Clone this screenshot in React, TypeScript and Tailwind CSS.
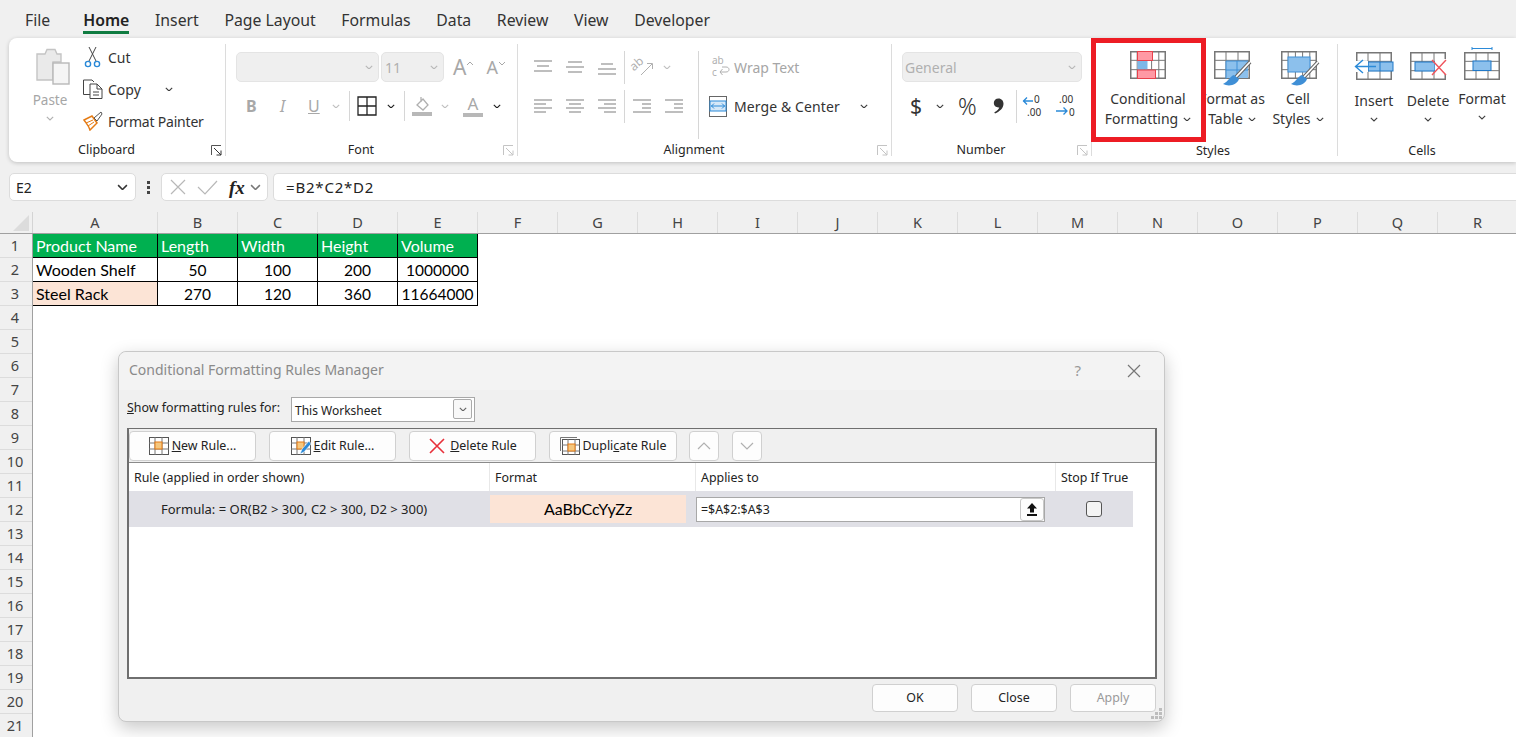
import React from "react";

const Chev = ({ c = "#404040", w = 8, cls = "" }: { c?: string; w?: number; cls?: string }) => (
  <svg width={w} height={w * 0.6} viewBox="0 0 10 6" className={"shrink-0 " + cls}>
    <path d="M1 1 L5 5 L9 1" fill="none" stroke={c} strokeWidth="1.4" />
  </svg>
);

const Launcher = ({ dark = false }: { dark?: boolean }) => (
  <svg width="11" height="11" viewBox="0 0 11 11" className="justify-self-end mt-[1px]">
    <path d="M0.5 10 V0.5 H10" fill="none" stroke={dark ? "#555" : "#c4c4c4"} />
    <path d="M3 3 L10 10 M10 5.5 V10 H5.5" fill="none" stroke={dark ? "#333" : "#c4c4c4"} />
  </svg>
);

const Grid = ({ x = 0, y = 0, w = 36, h = 28, cols = 3, rows = 3, c = "#777" }: any) => {
  const v = [];
  for (let i = 1; i < cols; i++) v.push(x + (w * i) / cols);
  const hz = [];
  for (let i = 1; i < rows; i++) hz.push(y + (h * i) / rows);
  return (
    <g stroke={c} fill="none" strokeWidth="1">
      <rect x={x + 0.75} y={y + 0.75} width={w - 1.5} height={h - 1.5} strokeWidth="1.5" />
      {v.map((p) => (
        <line key={p} x1={p} x2={p} y1={y} y2={y + h} />
      ))}
      {hz.map((p) => (
        <line key={p} y1={p} y2={p} x1={x} x2={x + w} />
      ))}
    </g>
  );
};

const Brush = ({ dx = 0 }: { dx?: number }) => (
  <g transform={`translate(${dx} 0)`}>
    <path d="M38 11 L24 26" stroke="#666" strokeWidth="3.8" />
    <path d="M38 11 L24 26" stroke="#fff" strokeWidth="1.8" />
    <path d="M22 24 C18 25 17 30 11 33 C17 36 25 34 27 28 Z" fill="#3f8fd6" />
  </g>
);

const CondIcon = () => (
  <svg width="37" height="29" viewBox="0 0 37 29">
    <Grid cols={5} rows={3} />
    <rect x="7.5" y="0.5" width="15" height="9" fill="#ff99a4" stroke="#e8424c" />
    <rect x="7.5" y="10" width="10" height="8.5" fill="#7eb7e8" />
    <rect x="7.5" y="19" width="18" height="8.5" fill="#ff99a4" stroke="#e8424c" />
  </svg>
);

const TableIcon = () => (
  <svg width="40" height="36" viewBox="0 0 40 36" className="overflow-visible">
    <Grid x={2} cols={3} rows={3} />
    <rect x="14" y="10" width="22" height="17" fill="#8cc0ec" />
    <path d="M14 10 V28 M25 10 V28 M14 19 H36 M14 10 H36" stroke="#3f8fd6" fill="none" />
    <Brush />
  </svg>
);

const StyleIcon = () => (
  <svg width="40" height="36" viewBox="0 0 40 36" className="overflow-visible">
    <Grid x={3} cols={5} rows={3} />
    <rect x="10" y="6" width="22" height="15" fill="#8cc0ec" stroke="#3f8fd6" />
    <Brush dx={2} />
  </svg>
);

const InsertIcon = () => (
  <svg width="40" height="29" viewBox="0 0 40 29">
    <Grid x={2} cols={3} rows={3} />
    <rect x="14" y="10" width="25" height="9" fill="#8cc0ec" stroke="#1f78c8" />
    <path d="M14 10 V19 M26 10 V19" stroke="#1f78c8" />
    <rect x="0" y="9" width="14" height="11" fill="#fff" />
    <path d="M22 14.5 H2 M9 8 L1.5 14.5 L9 21" stroke="#2b8ad8" strokeWidth="1.4" fill="none" />
  </svg>
);

const DeleteIcon = () => (
  <svg width="40" height="29" viewBox="0 0 40 29">
    <Grid x={2} cols={3} rows={3} />
    <rect x="7" y="10" width="20" height="9" fill="#8cc0ec" stroke="#1f78c8" />
    <rect x="27" y="7" width="13" height="15" fill="#fff" />
    <path d="M24 8 L38 23 M38 8 L24 23" stroke="#f0555d" strokeWidth="1.4" />
  </svg>
);

const FormatIcon = () => (
  <svg width="37" height="35" viewBox="0 0 37 35">
    <path d="M8 1.5 H28 M8 0 V3 M28 0 V3" stroke="#2b8ad8" fill="none" />
    <Grid y={5} cols={3} rows={3} />
    <rect x="9" y="14" width="18" height="9.5" fill="#8cc0ec" stroke="#1f78c8" />
  </svg>
);

const Lines = ({ rows, c = "#a8a8a8" }: { rows: [number, number, number][]; c?: string }) => (
  <svg width="18" height="16" viewBox="0 0 18 16">
    {rows.map(([y, a, b], i) => (
      <line key={i} x1={a} x2={b} y1={y} y2={y} stroke={c} strokeWidth="1.4" />
    ))}
  </svg>
);

const Sep = ({ h = 30 }: { h?: number }) => <div className="w-px bg-[#d6d6d6] shrink-0" style={{ height: h }} />;

const GroupFoot = ({ label, launcher, dark }: { label: string; launcher?: boolean; dark?: boolean }) => (
  <div className="h-[15px] shrink-0 grid grid-cols-[1fr_auto_1fr] items-center pr-[3px] text-[12.5px] leading-[15px] text-[#262626]">
    <span />
    <span className={launcher ? "mr-[18px]" : "mt-[1px]"}>{label}</span>
    {launcher ? <Launcher dark={dark} /> : <span />}
  </div>
);

const BigBtn = ({ icon, l1, l2, w, cls = "" }: { icon: React.ReactNode; l1: string; l2: string; w: number; cls?: string }) => (
  <div className={"flex flex-col items-center shrink-0 " + cls} style={{ width: w }}>
    <div className="h-[45px] pt-[7px] flex justify-center">{icon}</div>
    <div className="text-[14px] leading-[20px] text-[#333] whitespace-nowrap">{l1}</div>
    <div className="text-[14px] leading-[20px] text-[#333] whitespace-nowrap flex items-center gap-[5px]">
      {l2}
      <Chev w={8} />
    </div>
  </div>
);

const CellBtn = ({ icon, label, w, format = false }: { icon: React.ReactNode; label: string; w: number; format?: boolean }) => (
  <div className="flex flex-col items-center shrink-0" style={{ width: w }}>
    <div className={format ? "h-[45px] pt-[3px]" : "h-[47px] pt-[8px]"}>{icon}</div>
    <div className="text-[14px] leading-[20px] text-[#333]">{label}</div>
    <Chev w={8} cls="mt-[6px]" />
  </div>
);

const Clipboard = () => (
  <div className="w-[217px] h-full shrink-0 border-r border-[#dcdcdc] flex flex-col">
    <div className="h-[98px] shrink-0 flex">
      <div className="ml-[12px] w-[62px] pr-[4px] flex flex-col items-center pt-[4px]">
        <svg width="36" height="38" viewBox="0 0 36 38" className="ml-[6px]">
          <path d="M2 6 H10 L12 1.5 H20 L22 6 H26 V14 H18 V32 H2 Z" fill="#eaeaea" stroke="#c4c4c4" strokeWidth="1.4" />
          <rect x="18" y="15" width="16" height="21" fill="#f5f5f5" stroke="#b8b8b8" strokeWidth="1.4" />
        </svg>
        <div className="text-[13.5px] leading-[18px] text-[#a6a6a6] mt-[5px]">Paste</div>
        <Chev c="#b0b0b0" cls="mt-[7px]" />
      </div>
      <div className="-mt-[3px] text-[14px] text-[#333]">
        <div className="h-[32px] flex items-center gap-[5px]">
          <svg width="20" height="22" viewBox="0 0 20 22">
            <path d="M6 1 L13 15 M13 1 L6 15" stroke="#444" fill="none" />
            <circle cx="5" cy="18" r="2.6" fill="none" stroke="#2b8ad8" strokeWidth="1.4" />
            <circle cx="14" cy="18" r="2.6" fill="none" stroke="#2b8ad8" strokeWidth="1.4" />
          </svg>
          Cut
        </div>
        <div className="h-[32px] flex items-center gap-[5px]">
          <svg width="20" height="20" viewBox="0 0 20 20">
            <path d="M8 15.5 H0.5 V1 H9 L11 3" fill="#fff" stroke="#444" />
            <path d="M7 5 H14 L19 10 V19.5 H7 Z M14 5 V10 H19" fill="#fff" stroke="#444" />
            <path d="M10 13 H16 M10 16 H16" stroke="#444" />
          </svg>
          Copy
          <Chev cls="ml-[19px]" />
        </div>
        <div className="h-[32px] flex items-center gap-[5px] tracking-[-0.2px]">
          <svg width="20" height="20" viewBox="0 0 20 20">
            <path d="M1 9 L9 5 L14 12 L7 19 C6 15 3 12 1 9 Z" fill="#fff" stroke="#e57b14" strokeWidth="1.5" />
            <path d="M3 12 L10 9 M5 15 L11 11" stroke="#e57b14" />
            <path d="M11 7 L18 1 L19 3 L14 10 Z" fill="#fff" stroke="#555" />
          </svg>
          Format Painter
        </div>
      </div>
    </div>
    <GroupFoot label="Clipboard" launcher dark />
  </div>
);

const FontGroup = () => (
  <div className="w-[292px] h-full shrink-0 border-r border-[#dcdcdc] flex flex-col">
    <div className="h-[98px] shrink-0 pl-[10px] pt-[8px]">
      <div className="flex items-center h-[30px]">
        <div className="w-[143px] h-[30px] bg-[#efefef] border border-[#e4e4e4] rounded-[5px] flex items-center justify-end pr-[5px]">
          <Chev c="#b8b8b8" />
        </div>
        <div className="ml-[2px] w-[63px] h-[30px] bg-[#efefef] border border-[#e4e4e4] rounded-[5px] flex items-center justify-between px-[3px] pr-[5px] text-[14px] text-[#b0b0b0]">
          11
          <Chev c="#b8b8b8" />
        </div>
        <span className="ml-[9px] text-[21px] text-[#a8a8a8] leading-none">A</span>
        <svg width="8" height="5" viewBox="0 0 8 5" className="mb-[8px]"><path d="M1 4 L4 1 L7 4" fill="none" stroke="#a8a8a8" /></svg>
        <span className="ml-[12px] text-[18px] text-[#a8a8a8] leading-none">A</span>
        <svg width="8" height="5" viewBox="0 0 8 5" className="mb-[8px]"><path d="M1 1 L4 4 L7 1" fill="none" stroke="#a8a8a8" /></svg>
      </div>
      <div className="flex items-center h-[30px] mt-[9px]">
        <span className="ml-[10px] w-[15px] text-[16px] font-bold text-[#a8a8a8]">B</span>
        <span className="ml-[19px] w-[10px] text-[16px] italic text-[#a8a8a8]">I</span>
        <span className="ml-[18px] w-[14px] text-[16px] underline text-[#a8a8a8]">U</span>
        <Chev c="#c0c0c0" cls="ml-[10px]" />
        <div className="ml-[9px]"><Sep /></div>
        <svg width="20" height="20" viewBox="0 0 20 20" className="ml-[7px]">
          <path d="M1 1 H19 V19 H1 Z M10 1 V19 M1 10 H19" fill="none" stroke="#222" strokeWidth="1.3" />
        </svg>
        <Chev c="#222" cls="ml-[10px]" />
        <div className="ml-[9px]"><Sep /></div>
        <svg width="20" height="20" viewBox="0 0 20 20" className="ml-[7px]">
          <path d="M5 9 L11 3 L16 9 L11 14 Z M9 1 V6" fill="none" stroke="#b0b0b0" strokeWidth="1.3" />
          <rect x="0" y="16" width="20" height="4" fill="#b8b8b8" />
        </svg>
        <Chev c="#c0c0c0" cls="ml-[9px]" />
        <span className="relative ml-[14px] w-[20px] h-[22px] text-center text-[17px] leading-[17px] text-[#a8a8a8]">
          A
          <span className="block h-[4px] bg-[#b8b8b8] mt-[1px]" />
        </span>
        <Chev c="#222" cls="ml-[10px]" />
      </div>
    </div>
    <GroupFoot label="Font" launcher />
  </div>
);

const AlignmentGroup = () => {
  const gap = "ml-[14px]";
  return (
    <div className="w-[374px] h-full shrink-0 border-r border-[#dcdcdc] flex flex-col">
      <div className="h-[98px] shrink-0 pl-[16px] flex">
        <div>
          <div className="flex items-center h-[30px] mt-[8px]">
            <Lines rows={[[2, 0, 18], [7, 3, 15], [12, 0, 18]]} />
            <div className={gap}><Lines rows={[[3, 2, 16], [8, 0, 18], [13, 2, 16]]} /></div>
            <div className={gap}><Lines rows={[[5, 3, 15], [10, 0, 18], [15, 0, 18]]} /></div>
            <div className="ml-[8px]"><Sep h={33} /></div>
            <svg width="22" height="22" viewBox="0 0 22 22" className="ml-[7px] overflow-visible">
              <text x="-1" y="12" fontSize="12" fill="#b0b0b0" transform="rotate(-40 5 10)">ab</text>
              <path d="M9 19 L20 8 M15 7.5 H20.5 V13" fill="none" stroke="#b0b0b0" />
            </svg>
            <Chev c="#c0c0c0" cls="ml-[9px]" />
          </div>
          <div className="flex items-center h-[30px] mt-[9px]">
            <Lines rows={[[2, 0, 18], [6, 0, 12], [10, 0, 18], [14, 0, 12]]} />
            <div className={gap}><Lines rows={[[2, 0, 18], [6, 3, 15], [10, 0, 18], [14, 3, 15]]} /></div>
            <div className={gap}><Lines rows={[[2, 0, 18], [6, 6, 18], [10, 0, 18], [14, 6, 18]]} /></div>
            <div className="ml-[8px]"><Sep h={33} /></div>
            <div className="ml-[8px]"><Lines rows={[[2, 0, 18], [6, 9, 18], [10, 9, 18], [14, 0, 18]]} /></div>
            <div className="ml-[14px]"><Lines rows={[[2, 0, 18], [6, 9, 18], [10, 9, 18], [14, 0, 18]]} /></div>
          </div>
        </div>
        <div className="ml-[15px] mt-[7px]"><Sep h={88} /></div>
        <div className="ml-[13px] mt-[8px]">
          <div className="flex items-center h-[30px] text-[14px] text-[#a6a6a6] gap-[4px]">
            <svg width="18" height="24" viewBox="0 0 18 24" className="overflow-visible">
              <text x="0" y="9" fontSize="10" fill="#b0b0b0">ab</text>
              <text x="0" y="21" fontSize="10" fill="#b0b0b0">c</text>
              <path d="M8 17 H14 C18 17 18 12 14 12 H10 M10.5 14 L8 17 L10.5 20" fill="none" stroke="#b0b0b0" />
            </svg>
            Wrap Text
          </div>
          <div className="flex items-center h-[30px] mt-[9px] -ml-[3px] text-[14px] text-[#333] gap-[7px] tracking-[0.1px]">
            <svg width="18" height="21" viewBox="0 0 18 21">
              <rect x="0.5" y="0.5" width="17" height="20" fill="#fff" stroke="#666" />
              <rect x="1" y="5" width="16" height="10" fill="#d5e8f8" stroke="#2b8ad8" />
              <path d="M2 10 H16 M5 7.5 L2.5 10 L5 12.5 M13 7.5 L15.5 10 L13 12.5" fill="none" stroke="#2b8ad8" />
            </svg>
            Merge &amp; Center
            <Chev cls="ml-[13px]" />
          </div>
        </div>
      </div>
      <GroupFoot label="Alignment" launcher />
    </div>
  );
};

const NumberGroup = () => (
  <div className="w-[200px] h-full shrink-0 border-r border-[#dcdcdc] flex flex-col">
    <div className="h-[98px] shrink-0 pl-[10px] pt-[8px]">
      <div className="w-[180px] h-[30px] bg-[#efefef] border border-[#e4e4e4] rounded-[5px] flex items-center justify-between px-[2px] pr-[5px] text-[14px] text-[#b0b0b0]">
        General
        <Chev c="#b8b8b8" />
      </div>
      <div className="flex items-center h-[30px] mt-[9px] text-[#333]">
        <span className="ml-[8px] text-[21px] leading-none">$</span>
        <Chev cls="ml-[14px]" />
        <span className="ml-[14px] text-[23px] leading-none font-light">%</span>
        <svg width="11" height="16" viewBox="0 0 11 16" className="ml-[16px]">
          <path d="M5.5 0.5 C8.5 0.5 10.5 2.8 10.5 5.8 C10.5 10 7 13.5 2 15.5 L1.3 14.3 C4 12.8 5.8 11.2 6.3 9.4 C3 9.8 0.8 7.8 0.8 5 C0.8 2.4 2.8 0.5 5.5 0.5 Z" fill="#333" />
        </svg>
        <div className="ml-[12px]"><Sep h={33} /></div>
        <svg width="22" height="26" viewBox="0 0 22 26" className="ml-[6px] overflow-visible">
          <text x="11" y="10" fontSize="10" fill="#333">0</text>
          <text x="4" y="23" fontSize="10" fill="#333">.00</text>
          <path d="M0 8 H10 M4 4.5 L0.5 8 L4 11.5" fill="none" stroke="#2b8ad8" strokeWidth="1.3" />
        </svg>
        <svg width="22" height="26" viewBox="0 0 22 26" className="ml-[10px] overflow-visible">
          <text x="4" y="10" fontSize="10" fill="#333">.00</text>
          <text x="14" y="23" fontSize="10" fill="#333">0</text>
          <path d="M1 18 H12 M8.5 14.5 L12 18 L8.5 21.5" fill="none" stroke="#2b8ad8" strokeWidth="1.3" />
        </svg>
      </div>
    </div>
    <GroupFoot label="Number" launcher />
  </div>
);

const StylesGroup = () => (
  <div className="w-[246px] h-full shrink-0 border-r border-[#dcdcdc] flex flex-col">
    <div className="h-[98px] shrink-0 flex">
      <BigBtn icon={<CondIcon />} l1="Conditional" l2="Formatting" w={112} cls="relative z-10 bg-white" />
      <BigBtn icon={<TableIcon />} l1="Format as" l2="Table" w={56} />
      <BigBtn icon={<StyleIcon />} l1="Cell" l2="Styles" w={76} />
    </div>
    <GroupFoot label="Styles" />
  </div>
);

const CellsGroup = () => (
  <div className="w-[178px] h-full shrink-0 flex flex-col">
    <div className="h-[98px] shrink-0 flex pl-[9px]">
      <CellBtn icon={<InsertIcon />} label="Insert" w={54} />
      <CellBtn icon={<DeleteIcon />} label="Delete" w={54} />
      <CellBtn icon={<FormatIcon />} label="Format" w={54} format />
    </div>
    <div className="h-[15px] shrink-0 mt-[1px] pr-[10px] text-center text-[12.5px] leading-[15px] text-[#262626] w-[178px]">Cells</div>
  </div>
);

const FormulaBar = () => (
  <div className="flex items-center h-[28px] mt-[11px] pl-[9px] text-[#222]">
    <div className="w-[127px] h-[28px] bg-white border border-[#dcdcdc] rounded-[5px] flex items-center justify-between pl-[6px] pr-[7px] text-[14px]">
      E2
      <Chev c="#333" w={11} />
    </div>
    <div className="w-[25px] flex flex-col items-center gap-[2px]">
      <i className="w-[3px] h-[3px] bg-[#444] block" />
      <i className="w-[3px] h-[3px] bg-[#444] block" />
      <i className="w-[3px] h-[3px] bg-[#444] block" />
    </div>
    <div className="w-[107px] h-[28px] bg-white border border-[#dcdcdc] rounded-[5px] flex items-center pl-[8px]">
      <svg width="16" height="16" viewBox="0 0 16 16"><path d="M1 1 L15 15 M15 1 L1 15" stroke="#b8b8b8" strokeWidth="1.2" /></svg>
      <svg width="21" height="16" viewBox="0 0 21 16" className="ml-[11px]"><path d="M1 8 L8 15 L20 2" fill="none" stroke="#b8b8b8" strokeWidth="1.2" /></svg>
      <span className="ml-[11px] text-[19px] italic font-bold leading-none font-['Liberation_Serif',serif]">fx</span>
      <Chev c="#777" w={11} cls="ml-[5px]" />
    </div>
    <div className="ml-[5px] flex-1 h-[28px] bg-white border border-[#dcdcdc] border-r-0 rounded-l-[5px] flex items-center pl-[12px] text-[15px] tracking-[0.8px]">
      =B2*C2*D2
    </div>
  </div>
);

const COLS: [string, number][] = [
  ["A", 125], ["B", 80], ["C", 80], ["D", 80], ["E", 80], ["F", 80], ["G", 80], ["H", 80], ["I", 80],
  ["J", 80], ["K", 80], ["L", 80], ["M", 80], ["N", 80], ["O", 80], ["P", 80], ["Q", 80], ["R", 80],
];

const Sheet = () => {
  const cols = ["w-[125px]", "w-[80px]", "w-[80px]", "w-[80px]", "w-[80px]"];
  const head = ["Product Name", "Length", "Width", "Height", "Volume"];
  const body = [
    ["Wooden Shelf", "50", "100", "200", "1000000"],
    ["Steel Rack", "270", "120", "360", "11664000"],
  ];
  return (
    <div className="mt-[11px]">
      <div className="flex h-[22px] border-b border-[#a0a0a0]">
        <div className="w-[33px] shrink-0 border-r border-[#d4d4d4] flex items-end justify-end pr-[3px] pb-[2px]">
          <svg width="16" height="16" viewBox="0 0 16 16"><path d="M16 0 V16 H0 Z" fill="#dcdcdc" /></svg>
        </div>
        {COLS.map(([n, w]) => (
          <div key={n} className="shrink-0 border-r border-[#dcdcdc] text-center text-[14.5px] leading-[20px] text-[#444]" style={{ width: w }}>
            {n}
          </div>
        ))}
      </div>
      <div className="flex h-[503px] overflow-hidden">
        <div className="w-[33px] shrink-0 border-r border-[#a0a0a0]">
          {Array.from({ length: 21 }, (_, i) => (
            <div key={i} className="h-[24px] border-b border-[#dcdcdc] text-center pr-[2px] text-[14.5px] leading-[23px] text-[#444]">
              {i + 1}
            </div>
          ))}
        </div>
        <div className="flex-1 bg-white font-['Lato',sans-serif] text-[15.5px]">
          <div className="flex h-[24px] w-[445px] bg-[#00b050] text-white border-b border-black text-[16px]">
            {head.map((t, i) => (
              <div key={t} className={cols[i] + " border-r border-black pl-[3px] leading-[23px]"}>{t}</div>
            ))}
          </div>
          {body.map((r, ri) => (
            <div key={ri} className="flex h-[24px] w-[445px] text-black border-b border-black">
              {r.map((t, i) => (
                <div
                  key={t}
                  className={cols[i] + " border-r border-black " + (i === 0 ? "pl-[3px] text-[16px] leading-[23px] " : "text-center leading-[25px] ") + (ri === 1 && i === 0 ? "bg-[#fce4d6]" : "")}
                >
                  {t}
                </div>
              ))}
            </div>
          ))}
        </div>
      </div>
    </div>
  );
};

const DBtn = ({ w, children, cls = "" }: { w: number; children: React.ReactNode; cls?: string }) => (
  <div className={"h-[30px] shrink-0 bg-[#fdfdfd] border border-[#d0d0d0] rounded-[4px] flex items-center justify-center gap-[3px] text-[12.4px] text-[#222] " + cls} style={{ width: w }}>
    {children}
  </div>
);

const MiniGrid = ({ pen = false, shadow = false }: { pen?: boolean; shadow?: boolean }) => (
  <svg width="20" height="18" viewBox="0 0 20 18">
    {shadow && <path d="M0.5 14 V0.5 H17" fill="none" stroke="#777" />}
    <g transform={shadow ? "translate(2 2)" : ""}>
      <rect x="0.5" y="0.5" width={shadow ? 17 : 19} height={shadow ? 15 : 17} fill="#fff" stroke="#555" />
      <path d="M0 6 H20 M0 12 H20 M6 0 V18 M13 0 V18" stroke="#777" />
      <rect x="6" y="5" width="7" height="7" fill="#f5c77e" stroke="#e57b14" />
    </g>
    {pen && (
      <g>
        <path d="M9 17 L11 12 L18 4 L20 7 L13 15 Z" fill="#2b8ad8" stroke="#fff" strokeWidth="0.6" />
      </g>
    )}
  </svg>
);

const Dialog = () => (
  <div className="absolute left-[118px] top-[351px] w-[1047px] h-[371px] bg-[#f0f0f0] border border-[#c8c8c8] rounded-[8px] shadow-[0_6px_18px_rgba(0,0,0,0.22)] font-['Noto_Sans',sans-serif]">
    <div className="h-[38px] bg-[#f3f3f3] rounded-t-[8px] flex items-center pl-[10px] pr-[23px] text-[14px] leading-[36px] text-[#8a8a8a]">
      <span className="flex-1 -mt-[2px]">Conditional Formatting Rules Manager</span>
      <span className="mr-[46px] text-[15px] text-[#999] -mt-[2px]">?</span>
      <svg width="14" height="14" viewBox="0 0 14 14"><path d="M1 1 L13 13 M13 1 L1 13" stroke="#777" strokeWidth="1.2" /></svg>
    </div>
    <div className="h-[38px] flex items-center pl-[8px] text-[12.4px] text-[#222]">
      <span className="w-[164px] -mt-[2px]"><u>S</u>how formatting rules for:</span>
      <div className="w-[184px] h-[25px] bg-white border border-[#a8a8a8] flex items-center justify-between pl-[3px] pr-[2px] text-[12px]">
        <span className="mt-[3px]">This Worksheet</span>
        <span className="w-[19px] h-[20px] bg-[#f8f8f8] border border-[#aaa] rounded-[2px] flex items-center justify-center">
          <Chev c="#666" w={8} />
        </span>
      </div>
    </div>
    <div className="ml-[8px] w-[1030px] h-[251px] border-x-2 border-t border-b-2 border-[#6f6f6f] flex flex-col">
      <div className="h-[34px] shrink-0 border-b border-[#8a8a8a] pt-[2px] flex gap-[13px] bg-[#f0f0f0]">
        <DBtn w={127}><MiniGrid /><span><u>N</u>ew Rule...</span></DBtn>
        <DBtn w={127}><MiniGrid pen /><span><u>E</u>dit Rule...</span></DBtn>
        <DBtn w={127}>
          <svg width="18" height="18" viewBox="0 0 18 18" className="mr-[1px]"><path d="M2 2 L16 16 M16 2 L2 16" stroke="#e8303a" strokeWidth="1.6" /></svg>
          <span><u>D</u>elete Rule</span>
        </DBtn>
        <DBtn w={128}><MiniGrid shadow /><span>Dupli<u>c</u>ate Rule</span></DBtn>
        <DBtn w={30} cls="-ml-[1px]"><svg width="14" height="8" viewBox="0 0 14 8"><path d="M1 7 L7 1 L13 7" fill="none" stroke="#b0b0b0" strokeWidth="1.2" /></svg></DBtn>
        <DBtn w={30}><svg width="14" height="8" viewBox="0 0 14 8"><path d="M1 1 L7 7 L13 1" fill="none" stroke="#b0b0b0" strokeWidth="1.2" /></svg></DBtn>
      </div>
      <div className="flex-1 bg-white text-[12.4px] text-[#222]">
        <div className="flex h-[28px] items-center">
          <div className="w-[361px] h-full border-r border-[#e8e8e8] pl-[5px] pt-[3px] flex items-center">Rule (applied in order shown)</div>
          <div className="w-[206px] h-full border-r border-[#e8e8e8] pl-[5px] pt-[3px] flex items-center">Format</div>
          <div className="w-[360px] h-full border-r border-[#e8e8e8] pl-[5px] pt-[3px] flex items-center">Applies to</div>
          <div className="w-[77px] h-full pl-[5px] pt-[3px] flex items-center">Stop If True</div>
        </div>
        <div className="flex h-[36px] w-[1004px] bg-[#e0e0e6] items-center">
          <div className="w-[361px] pl-[32px] pt-[2px] text-[13px] whitespace-nowrap">Formula: = OR(B2 &gt; 300, C2 &gt; 300, D2 &gt; 300)</div>
          <div className="w-[206px]">
            <div className="w-[196px] h-[28px] -mt-[1px] bg-[#fce4d6] flex items-center justify-center text-[16px] font-['Lato',sans-serif] text-black">
              AaBbCcYyZz
            </div>
          </div>
          <div className="w-[360px]">
            <div className="w-[349px] h-[25px] bg-white border border-[#a8a8a8] flex items-center justify-between pl-[4px]">
              <span className="mt-[2px]">=$A$2:$A$3</span>
              <span className="w-[24px] h-[23px] border border-[#c8c8c8] rounded-[3px] bg-[#fdfdfd] flex items-center justify-center">
                <svg width="12" height="15" viewBox="0 0 12 15"><path d="M6 1 L11 6.5 H8 V10.5 H4 V6.5 H1 Z" fill="#111" /><rect x="1" y="12" width="10" height="2" fill="#111" /></svg>
              </span>
            </div>
          </div>
          <div className="w-[77px] pl-[30px]">
            <div className="w-[16px] h-[16px] bg-[#f4f4f4] border border-[#555] rounded-[3px]" />
          </div>
        </div>
      </div>
    </div>
    <div className="flex justify-end gap-[13px] pr-[8px] pt-[5px]">
      {["OK", "Close", "Apply"].map((t) => (
        <div key={t} className={"w-[86px] h-[28px] bg-[#fdfdfd] border border-[#d0d0d0] rounded-[4px] flex items-center justify-center text-[12.4px] " + (t === "Apply" ? "text-[#9a9a9a]" : "text-[#222]")}>
          {t}
        </div>
      ))}
    </div>
    <svg width="13" height="12" viewBox="0 0 13 12" className="absolute right-[1px] bottom-[1px]">
      <g fill="#bdbdbd">
        <rect x="9" y="0" width="3" height="3" />
        <rect x="5" y="4" width="3" height="3" />
        <rect x="9" y="4" width="3" height="3" />
        <rect x="1" y="8" width="3" height="3" />
        <rect x="5" y="8" width="3" height="3" />
        <rect x="9" y="8" width="3" height="3" />
      </g>
    </svg>
  </div>
);

export default function App() {
  const tabs = ["File", "Home", "Insert", "Page Layout", "Formulas", "Data", "Review", "View", "Developer"];
  return (
    <div className="relative w-[1516px] h-[737px] overflow-hidden bg-[#f0f0f0] font-['Noto_Sans',sans-serif]">
      <div className="h-[38px] flex items-center pl-[25px] gap-[25.6px] text-[15.8px] text-[#333]">
        {tabs.map((t) => (
          <div key={t} className={"relative h-[38px] leading-[40px] " + (t === "Home" ? "font-semibold text-[#222] " : "") + (t === "File" ? "mr-[7.4px]" : "")}>
            {t}
            {t === "Home" && <div className="absolute left-0 right-0 top-[31px] h-[3px] bg-[#107c41]" />}
          </div>
        ))}
      </div>
      <div className="ml-[9px] h-[124px] bg-white rounded-l-[8px] shadow-[0_1px_4px_rgba(0,0,0,0.2)] py-[6px] flex overflow-hidden">
        <Clipboard />
        <FontGroup />
        <AlignmentGroup />
        <NumberGroup />
        <StylesGroup />
        <CellsGroup />
      </div>
      <FormulaBar />
      <Sheet />
      <Dialog />
      <div className="absolute z-20 left-[1091px] top-[38px] w-[115px] h-[104px] border-[5px] border-[#ed1c24]" />
    </div>
  );
}
